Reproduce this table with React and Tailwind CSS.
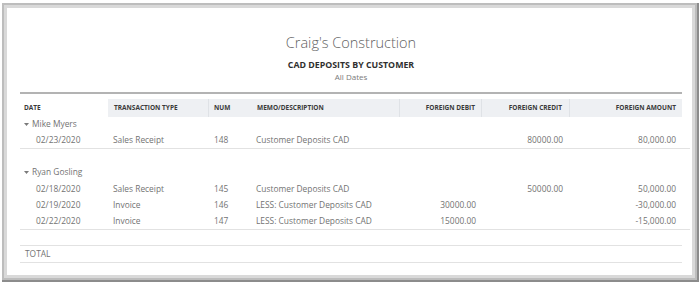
import React from "react";

const cols = "grid grid-cols-[88px_101px_43px_148px_82px_88px_112px]";

function Row({ cells, className = "h-[16px]" }) {
  return (
    <div className={`${cols} items-center text-[8.4px] text-[#737373] ${className}`}>
      <div className="pl-[16px]">{cells[0]}</div>
      <div className="pl-[5px]">{cells[1]}</div>
      <div className="pl-[5px]">{cells[2]}</div>
      <div className="pl-[4px]">{cells[3]}</div>
      <div className="pr-[6px] text-right">{cells[4]}</div>
      <div className="pr-[7px] text-right">{cells[5]}</div>
      <div className="pr-[6px] text-right">{cells[6]}</div>
    </div>
  );
}

function Group({ name }) {
  return (
    <div className="flex h-[16px] items-center pb-[2px] pl-[4px] text-[8.4px] text-[#737373]">
      <svg width="5" height="3" viewBox="0 0 5 3" className="mr-[3px]">
        <polygon points="0,0 5,0 2.5,3" fill="#7a7a7a" />
      </svg>
      <span>{name}</span>
    </div>
  );
}

export default function App() {
  return (
    <div className="h-[283px] w-[700px] bg-white pl-[2px] pt-[3px] font-['Open_Sans',sans-serif]">
      <div className="h-[277px] w-[695px] border-[2px] border-[#bdbdbd] shadow-[inset_0_0_0_1px_#e6e6e6,1px_1px_0_1px_#8c8c8c]">
        <div className="h-full w-full border-[3px] border-[#d9d9d9] bg-white pl-[13px] pr-[2px]">
          <div className="flex w-[662px] flex-col items-center pt-[25px]">
            <div className="text-[14.5px] font-light leading-[20px] text-[#5f5f5f]">Craig's Construction</div>
            <div className="mt-[6px] text-[8.8px] font-bold leading-[12px] text-[#2f2f2f]">CAD DEPOSITS BY CUSTOMER</div>
            <div className="text-[8px] leading-[11px] text-[#7a7a7a]">All Dates</div>
          </div>
          <div className="mt-[10px] h-[2px] w-[662px] bg-[#b3b3b3]" />
          <div className={`${cols} mt-[5px] h-[18px] items-center text-[6.5px] font-bold text-[#3a3a3a]`}>
            <div className="flex h-full items-center bg-white pl-[4px]">DATE</div>
            <div className="flex h-full items-center border-r border-[#dfe2e6] bg-[#eef0f3] pl-[6px]">TRANSACTION TYPE</div>
            <div className="flex h-full items-center bg-[#eef0f3] pl-[5px]">NUM</div>
            <div className="flex h-full items-center border-r border-[#dfe2e6] bg-[#eef0f3] pl-[5px]">MEMO/DESCRIPTION</div>
            <div className="flex h-full items-center justify-end border-r border-[#dfe2e6] bg-[#eef0f3] pr-[6px]">FOREIGN DEBIT</div>
            <div className="flex h-full items-center justify-end border-r border-[#dfe2e6] bg-[#eef0f3] pr-[7px]">FOREIGN CREDIT</div>
            <div className="flex h-full items-center justify-end bg-[#eef0f3] pr-[6px]">FOREIGN AMOUNT</div>
          </div>
          <Group name="Mike Myers" />
          <Row
            className="h-[16px] border-b border-[#e2e2e2]"
            cells={["02/23/2020", "Sales Receipt", "148", "Customer Deposits CAD", "", "80000.00", "80,000.00"]}
          />
          <div className="h-[16px]" />
          <Group name="Ryan Gosling" />
          <Row cells={["02/18/2020", "Sales Receipt", "145", "Customer Deposits CAD", "", "50000.00", "50,000.00"]} />
          <Row cells={["02/19/2020", "Invoice", "146", "LESS: Customer Deposits CAD", "30000.00", "", "-30,000.00"]} />
          <Row
            className="h-[17px] border-b border-[#e2e2e2]"
            cells={["02/22/2020", "Invoice", "147", "LESS: Customer Deposits CAD", "15000.00", "", "-15,000.00"]}
          />
          <div className="h-[16px] w-[662px] border-b border-[#e2e2e2]" />
          <div className="flex h-[17px] w-[662px] items-center border-b border-[#e2e2e2] pl-[5px] text-[8.4px] text-[#737373]">TOTAL</div>
        </div>
      </div>
    </div>
  );
}
